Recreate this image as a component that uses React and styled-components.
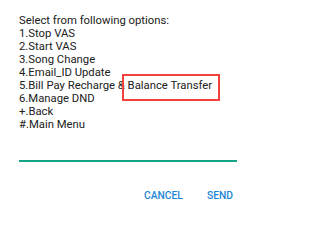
import React from "react";
import styled, { createGlobalStyle } from "styled-components";

const Global = createGlobalStyle`
  html, body { margin: 0; padding: 0; background: #fff; }
  body { font-family: Roboto, "Noto Sans", Arial, sans-serif; }
`;

const Dialog = styled.div`
  width: 253px;
  height: 218px;
  box-sizing: border-box;
  padding: 13.6px 16px 0 19px;
  background: #fff;
  display: flex;
  flex-direction: column;
  font-family: Roboto, "Noto Sans", Arial, sans-serif;
`;

const Message = styled.div`
  font-family: Roboto, sans-serif;
  font-size: 11.3px;
  line-height: 13px;
  color: #212121;
`;

const Line = styled.div`
  white-space: nowrap;
`;

const Highlight = styled.span`
  position: relative;
  display: inline-block;
  line-height: 13px;
  &::after {
    content: "";
    position: absolute;
    top: -4.6px;
    left: -6px;
    right: -8px;
    bottom: -9.4px;
    border: 2px solid #f4413e;
  }
`;

const Input = styled.div`
  flex: none;
  height: 29.4px;
  border-bottom: 2px solid #16a584;
`;

const Actions = styled.div`
  display: flex;
  justify-content: flex-end;
  gap: 24px;
  padding-top: 28.4px;
  padding-right: 4px;
`;

const ActionButton = styled.button`
  border: none;
  background: none;
  padding: 0;
  margin: 0;
  font-family: Roboto, Arial, sans-serif;
  font-weight: 500;
  font-size: 10.3px;
  line-height: 12px;
  color: #1f86d4;
  cursor: pointer;
`;

const lines = [
  "Select from following options:",
  "1.Stop VAS",
  "2.Start VAS",
  "3.Song Change",
  "4.Email_ID Update",
];

export default function App() {
  return (
    <>
      <Global />
      <Dialog>
        <Message>
          {lines.map((l) => (
            <Line key={l}>{l}</Line>
          ))}
          <Line>
            5.Bill Pay Recharge & <Highlight>Balance Transfer</Highlight>
          </Line>
          <Line>6.Manage DND</Line>
          <Line>+.Back</Line>
          <Line>#.Main Menu</Line>
        </Message>
        <Input />
        <Actions>
          <ActionButton>CANCEL</ActionButton>
          <ActionButton>SEND</ActionButton>
        </Actions>
      </Dialog>
    </>
  );
}
